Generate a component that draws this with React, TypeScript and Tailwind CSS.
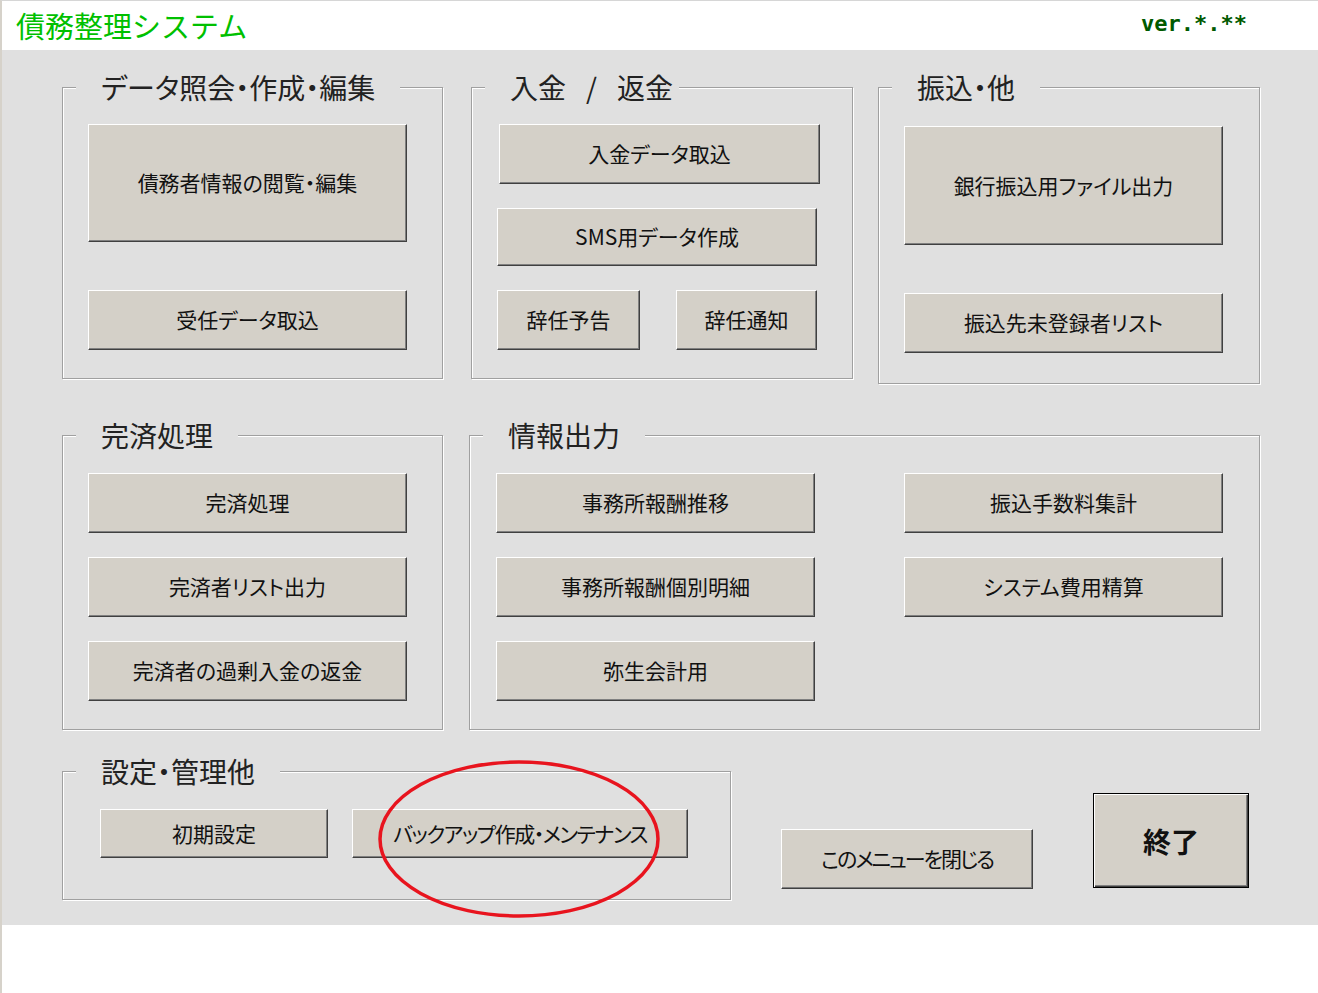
import type { ReactNode } from 'react';

const jp = "font-['Noto_Sans_CJK_JP',sans-serif]";

function Btn({ className = '', children }: { className?: string; children: ReactNode }) {
  return (
    <button
      type="button"
      className={`flex items-center justify-center bg-[#d4d0c8] border border-t-white border-l-white border-r-[#404040] border-b-[#404040] shadow-[inset_-1px_-1px_0_#808080] text-[21px] text-[#111] [font-feature-settings:'palt'] ${jp} ${className}`}
    >
      {children}
    </button>
  );
}

function Group({
  title,
  className = '',
  bodyClass = '',
  legendClass = 'pr-[25px]',
  children,
}: {
  title: ReactNode;
  className?: string;
  bodyClass?: string;
  legendClass?: string;
  children: ReactNode;
}) {
  return (
    <fieldset
      className={`border border-[#a0a0a0] shadow-[inset_1px_1px_0_#fff,1px_1px_0_#fff] ${className}`}
    >
      <legend
        className={`ml-[13px] pl-[25px] bg-[#e0e0e0] text-[28px] leading-[30px] text-[#222] [font-feature-settings:'palt'] ${jp} ${legendClass}`}
      >
        {title}
      </legend>
      <div className={bodyClass}>{children}</div>
    </fieldset>
  );
}

export default function App() {
  return (
    <div className="relative w-[1318px] h-[993px] bg-white border-t border-t-[#d6d6d6] border-l-2 border-l-[#d6d2ca] overflow-hidden">
      {/* Header */}
      <div className="h-[49px] flex items-center justify-between pl-[14px] pr-[71px]">
        <h1 className={`text-[29px] leading-none text-[#00c000] ${jp}`}>債務整理システム</h1>
        <span className="font-['DejaVu_Sans_Mono',monospace] font-bold text-[22px] leading-none text-[#005a00] -mt-[3px]">
          ver.*.**
        </span>
      </div>

      {/* Menu area */}
      <div className="h-[875px] bg-[#e0e0e0] pl-[60px] pt-[22px]">
        {/* Row 1 */}
        <div className="flex items-start">
          <Group title="データ照会・作成・編集" className="w-[381px] h-[307px]" bodyClass="pl-[25px] pt-[22px]">
            <Btn className="w-[319px] h-[118px]">債務者情報の閲覧・編集</Btn>
            <Btn className="w-[319px] h-[60px] mt-[48px]">受任データ取込</Btn>
          </Group>

          <Group
            title={
              <>
                入金<span className="mx-[20px]">/</span>返金
              </>
            }
            legendClass="pr-[6px]"
            className="ml-[28px] w-[382px] h-[307px]"
            bodyClass="pl-[25px] pt-[22px]"
          >
            <Btn className="ml-[2px] w-[321px] h-[60px]">入金データ取込</Btn>
            <Btn className="w-[320px] h-[58px] mt-[24px]">SMS用データ作成</Btn>
            <div className="flex mt-[24px]">
              <Btn className="w-[143px] h-[60px]">辞任予告</Btn>
              <Btn className="w-[141px] h-[60px] ml-[36px]">辞任通知</Btn>
            </div>
          </Group>

          <Group title="振込・他" className="ml-[25px] w-[382px] h-[312px]" bodyClass="pl-[25px] pt-[24px]">
            <Btn className="w-[319px] h-[119px]">銀行振込用ファイル出力</Btn>
            <Btn className="w-[319px] h-[60px] mt-[48px]">振込先未登録者リスト</Btn>
          </Group>
        </div>

        {/* Row 2 */}
        <div className="flex items-start mt-[36px]">
          <Group title="完済処理" className="w-[381px] h-[310px]" bodyClass="pl-[25px] pt-[23px] flex flex-col gap-[24px]">
            <Btn className="w-[319px] h-[60px]">完済処理</Btn>
            <Btn className="w-[319px] h-[60px]">完済者リスト出力</Btn>
            <Btn className="w-[319px] h-[60px]">完済者の過剰入金の返金</Btn>
          </Group>

          <Group
            title="情報出力"
            className="ml-[26px] w-[791px] h-[310px]"
            bodyClass="pl-[26px] pt-[23px] grid grid-cols-[319px_319px] gap-x-[89px] gap-y-[24px]"
          >
            <Btn className="h-[60px]">事務所報酬推移</Btn>
            <Btn className="h-[60px]">振込手数料集計</Btn>
            <Btn className="h-[60px]">事務所報酬個別明細</Btn>
            <Btn className="h-[60px]">システム費用精算</Btn>
            <Btn className="h-[60px]">弥生会計用</Btn>
          </Group>
        </div>

        {/* Row 3 */}
        <div className="flex items-start mt-[26px]">
          <Group title="設定・管理他" className="w-[669px] h-[144px]" bodyClass="pl-[37px] pt-[23px] flex">
            <Btn className="w-[228px] h-[49px]">初期設定</Btn>
            <Btn className="w-[336px] h-[49px] ml-[24px] tracking-[-1.5px]">バックアップ作成・メンテナンス</Btn>
          </Group>

          <Btn className="ml-[50px] mt-[73px] w-[252px] h-[60px] tracking-[-2px]">このメニューを閉じる</Btn>

          <button
            type="button"
            className={`ml-[60px] mt-[37px] w-[156px] h-[95px] border border-black bg-[#d4d0c8] shadow-[inset_1px_1px_0_#fff,inset_-1px_-1px_0_#404040,inset_-2px_-2px_0_#808080] text-[28px] font-bold text-[#111] ${jp}`}
          >
            終了
          </button>
        </div>
      </div>

      {/* Red annotation circle */}
      <svg
        className="absolute left-[374px] top-[757px] pointer-events-none"
        width="288"
        height="162"
        viewBox="0 0 288 162"
      >
        <ellipse cx="143" cy="81" rx="139" ry="77" fill="none" stroke="#e8141e" strokeWidth="3.5" />
      </svg>
    </div>
  );
}
